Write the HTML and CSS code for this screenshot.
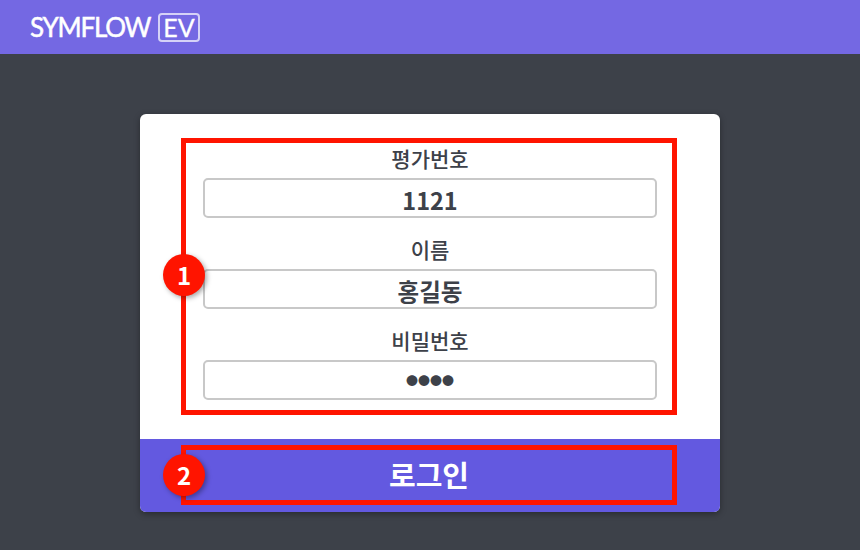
FILE: index.html
```html
<!DOCTYPE html>
<html lang="ko">
<head>
    <meta charset="UTF-8">
    <title>SYMFLOW EV</title>
    <link rel="stylesheet" href="styles.css">
</head>
<body>

<!-- Cabecalho -->
<header class="topbar">
    <span class="logo">SYMFLOW</span>
    <span class="logo-tag">EV</span>
</header>

<!-- Login -->
<main class="page">
    <form class="card">
        <div class="mark-box">
            <span class="badge badge-1">1</span>
            <div class="field">
                <label for="evalno">평가번호</label>
                <input id="evalno" type="text" value="1121">
            </div>
            <div class="field">
                <label for="name">이름</label>
                <input id="name" type="text" value="홍길동">
            </div>
            <div class="field">
                <label for="pw">비밀번호</label>
                <input id="pw" class="input-pw" type="text" value="●●●●">
            </div>
        </div>

        <div class="login-bar">
            <div class="mark-box-btn">
                <span class="badge badge-2">2</span>
                <span class="login-text">로그인</span>
            </div>
        </div>
    </form>
</main>

</body>
</html>
```

FILE: styles.css
```css
* {
    box-sizing: border-box;
}

body {
    margin: 0;
    height: 550px;
    overflow: hidden;
    background: #3d4149;
    font-family: "Noto Sans CJK KR", "Noto Sans", sans-serif;
    color: #3d4149;
}

.topbar {
    height: 54px;
    padding-left: 30px;
    display: flex;
    align-items: center;
    background: #7468e3;
    color: white;
}

.logo {
    width: 128px;
    font-family: Lato, sans-serif;
    font-size: 26px;
    line-height: 28px;
    letter-spacing: -1.2px;
    -webkit-text-stroke: 0.5px white;
}

.logo-tag {
    width: 42px;
    height: 29px;
    border: 2px solid rgba(255, 255, 255, 0.7);
    border-radius: 4px;
    font-family: Lato, sans-serif;
    font-size: 25px;
    line-height: 25px;
    text-align: center;
    -webkit-text-stroke: 0.3px white;
}

.page {
    padding-top: 60px;
    display: flex;
    justify-content: center;
}

.card {
    width: 580px;
    height: 398px;
    background: white;
    border-radius: 6px;
    box-shadow: 0 2px 6px rgba(0, 0, 0, 0.35);
}

.mark-box {
    position: relative;
    width: 496px;
    height: 277px;
    margin: 24px 0 24px 41px;
    padding: 2px 15px 0 17px;
    border: 5px solid #ff1400;
}

.field {
    margin-bottom: 18px;
}

.field label {
    display: block;
    height: 33px;
    font-size: 21px;
    font-weight: 500;
    line-height: 26px;
    text-align: center;
}

.field input {
    display: block;
    width: 100%;
    height: 40px;
    padding: 3px 0 0;
    border: 2px solid #c8c8c8;
    border-radius: 5px;
    outline: none;
    background: white;
    font-family: inherit;
    font-size: 23.5px;
    font-weight: 700;
    color: #3d4149;
    text-align: center;
}

.field .input-pw {
    padding-top: 0;
    font-size: 12px;
}

.login-bar {
    height: 73px;
    padding: 6px 0 7px 41px;
    background: #6359e0;
    border-radius: 0 0 6px 6px;
}

.mark-box-btn {
    position: relative;
    width: 496px;
    height: 60px;
    display: flex;
    align-items: center;
    justify-content: center;
    border: 5px solid #ff1400;
}

.login-text {
    margin-top: -2px;
    font-size: 29px;
    font-weight: 700;
    color: white;
}

.badge {
    position: absolute;
    left: -23px;
    width: 42px;
    height: 42px;
    border-radius: 50%;
    background: #ff1400;
    color: white;
    font-size: 24px;
    font-weight: 700;
    line-height: 42px;
    text-align: center;
    box-shadow: 2px 2px 5px rgba(0, 0, 0, 0.35);
}

.badge-1 {
    top: 111px;
}

.badge-2 {
    top: 4px;
}
```
